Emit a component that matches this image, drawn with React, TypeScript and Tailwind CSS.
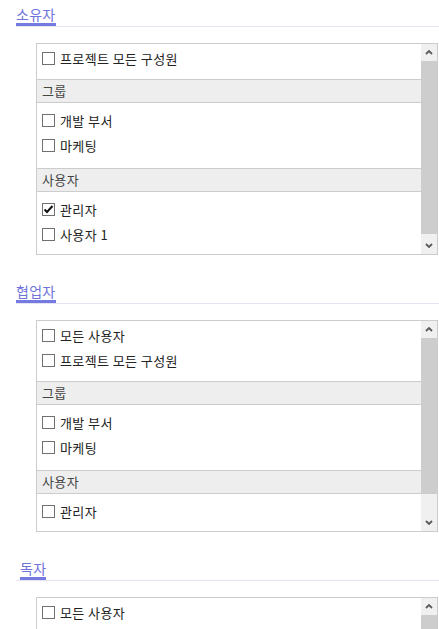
import { ReactNode } from "react";

type Item = { name: string; checked?: boolean };
type Group = { label?: string; items: Item[] };

const ownerGroups: Group[] = [
  { items: [{ name: "프로젝트 모든 구성원" }] },
  { label: "그룹", items: [{ name: "개발 부서" }, { name: "마케팅" }] },
  {
    label: "사용자",
    items: [{ name: "관리자", checked: true }, { name: "사용자 1" }],
  },
];

const sharedGroups: Group[] = [
  { items: [{ name: "모든 사용자" }, { name: "프로젝트 모든 구성원" }] },
  { label: "그룹", items: [{ name: "개발 부서" }, { name: "마케팅" }] },
  { label: "사용자", items: [{ name: "관리자" }] },
];

const Chevron = ({ down }: { down?: boolean }) => (
  <svg width="8" height="5" viewBox="0 0 8 5" className="block">
    <path
      d={down ? "M1 1 L4 4 L7 1" : "M1 4 L4 1 L7 4"}
      stroke="#5a5a5a"
      strokeWidth="1.8"
      fill="none"
    />
  </svg>
);

const Checkbox = ({ checked }: { checked?: boolean }) => (
  <span className="w-[13px] h-[13px] border border-[#707070] bg-white flex items-center justify-center shrink-0">
    {checked && (
      <svg width="11" height="11" viewBox="0 0 11 11">
        <path
          d="M1.5 5.5 L4 8 L9.5 2"
          stroke="#111"
          strokeWidth="2"
          fill="none"
        />
      </svg>
    )}
  </span>
);

// fake scrollbar, the page shows a classic windows one
const Scrollbar = ({ thumb }: { thumb: number }) => (
  <div className="w-[16px] flex flex-col bg-[#f0f0f0] shrink-0">
    <div className="h-[17px] flex items-center justify-center">
      <Chevron />
    </div>
    <div className="flex-1">
      <div className="bg-[#cdcdcd]" style={{ height: thumb }} />
    </div>
    <div className="h-[17px] flex items-center justify-center">
      <Chevron down />
    </div>
  </div>
);

const ListBox = ({ groups, thumb }: { groups: Group[]; thumb: number }) => (
  <div className="ml-[20px] mr-[1px] h-[212px] border border-[#cccccc] flex bg-white">
    <div className="flex-1 overflow-hidden">
      {groups.map((group, i) => (
        <div key={i}>
          {group.label && (
            <div className="h-[24px] border-y border-[#cccccc] bg-[#eeeeee] flex items-center pl-[5px] text-[13px] tracking-[0.4px] text-[#444]">
              {group.label}
            </div>
          )}
          <div className={i === 0 ? "pt-[2px] pb-[8px]" : "pt-[5px] pb-[10px]"}>
            {group.items.map((item) => (
              <label
                key={item.name}
                className="h-[25px] flex items-center gap-[5px] pl-[5px] text-[13px] tracking-[0.4px] text-[#222]"
              >
                <Checkbox checked={item.checked} />
                {item.name}
              </label>
            ))}
          </div>
        </div>
      ))}
    </div>
    <Scrollbar thumb={thumb} />
  </div>
);

const Section = ({
  title,
  indent,
  children,
}: {
  title: string;
  indent?: boolean;
  children: ReactNode;
}) => (
  <div className="mb-[22px]">
    <div className="flex border-b border-[#e4e4f2] pt-[5px]">
      <span
        className={`block leading-[18px] text-[14px] tracking-[0.3px] text-[#6f74dc] border-b-[3px] border-[#757ae0] ${
          indent ? "ml-[4px]" : ""
        }`}
      >
        {title}
      </span>
    </div>
    <div className="mt-[16px]">{children}</div>
  </div>
);

export default function App() {
  return (
    <div
      className="w-[439px] bg-white pl-[16px]"
      style={{ fontFamily: '"Noto Sans CJK KR", "Noto Sans", sans-serif' }}
    >
      <Section title="소유자">
        <ListBox groups={ownerGroups} thumb={173} />
      </Section>
      <Section title="협업자">
        <ListBox groups={sharedGroups} thumb={156} />
      </Section>
      <Section title="독자" indent>
        <ListBox groups={sharedGroups} thumb={156} />
      </Section>
    </div>
  );
}
